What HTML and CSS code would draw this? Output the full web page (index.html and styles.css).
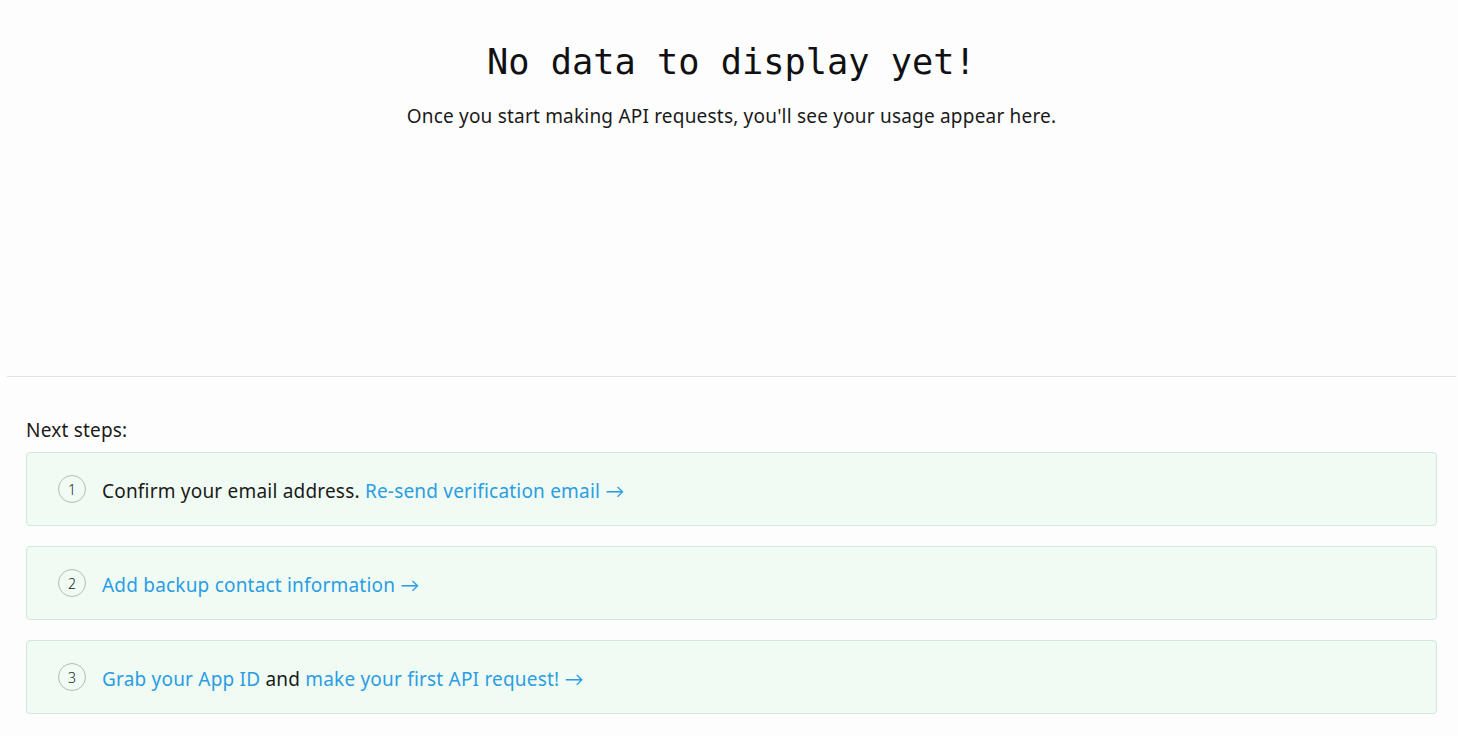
FILE: index.html
```html
<!DOCTYPE html>
<html>
<head>
<meta charset="utf-8">
<link rel="stylesheet" href="styles.css">
</head>
<body>
<div class="page">
  <section class="empty">
    <h1 class="empty-title">No data to display yet!</h1>
    <p class="empty-sub">Once you start making API requests, you'll see your usage appear here.</p>
  </section>
  <section class="steps">
    <p class="steps-label">Next steps:</p>
    <div class="step">
      <span class="num">1</span>
      <span class="step-text">Confirm your email address. <a class="link" href="#">Re-send verification email →</a></span>
    </div>
    <div class="step">
      <span class="num">2</span>
      <span class="step-text"><a class="link" href="#">Add backup contact information →</a></span>
    </div>
    <div class="step">
      <span class="num">3</span>
      <span class="step-text"><a class="link" href="#">Grab your App ID</a> and <a class="link" href="#">make your first API request! →</a></span>
    </div>
  </section>
</div>
</body>
</html>
```
FILE: styles.css
```css
html, body {
  margin: 0;
  padding: 0;
  background: #fdfdfd;
}
body {
  font-family: "Noto Sans", Lato, sans-serif;
  color: #1a1a1a;
  letter-spacing: 0.2px;
}
.page {
  padding: 0 2px 0 7px;
}
.empty {
  height: 377px;
  border-bottom: 1px solid #e4e4e4;
  text-align: center;
  box-sizing: border-box;
  padding-top: 40px;
}
.empty-title {
  margin: 0;
  font-family: "DejaVu Sans Mono", monospace;
  font-weight: normal;
  font-size: 35.3px;
  line-height: 44px;
  letter-spacing: 0;
  color: #111;
}
.empty-sub {
  margin: 20px 0 0;
  font-size: 19px;
  line-height: 24px;
  color: #1a1a1a;
}
.steps {
  padding: 41px 19px 0;
}
.steps-label {
  margin: 0 0 10px;
  font-size: 19px;
  line-height: 24px;
}
.step {
  display: flex;
  align-items: center;
  gap: 16px;
  height: 74px;
  box-sizing: border-box;
  padding: 0 31px;
  margin-bottom: 20px;
  background: #f0fbf3;
  border: 1px solid #d5e6dc;
  border-radius: 4px;
  font-size: 19px;
}
.step-text {
  padding-top: 3px;
}
.num {
  width: 28px;
  height: 28px;
  border: 1px solid #b8b8b8;
  border-radius: 50%;
  box-sizing: border-box;
  display: flex;
  align-items: center;
  justify-content: center;
  padding-top: 1px;
  font-size: 14px;
  font-weight: 300;
  letter-spacing: 0;
  color: #222;
}
.link {
  color: #2b9de3;
  text-decoration: none;
}
```
